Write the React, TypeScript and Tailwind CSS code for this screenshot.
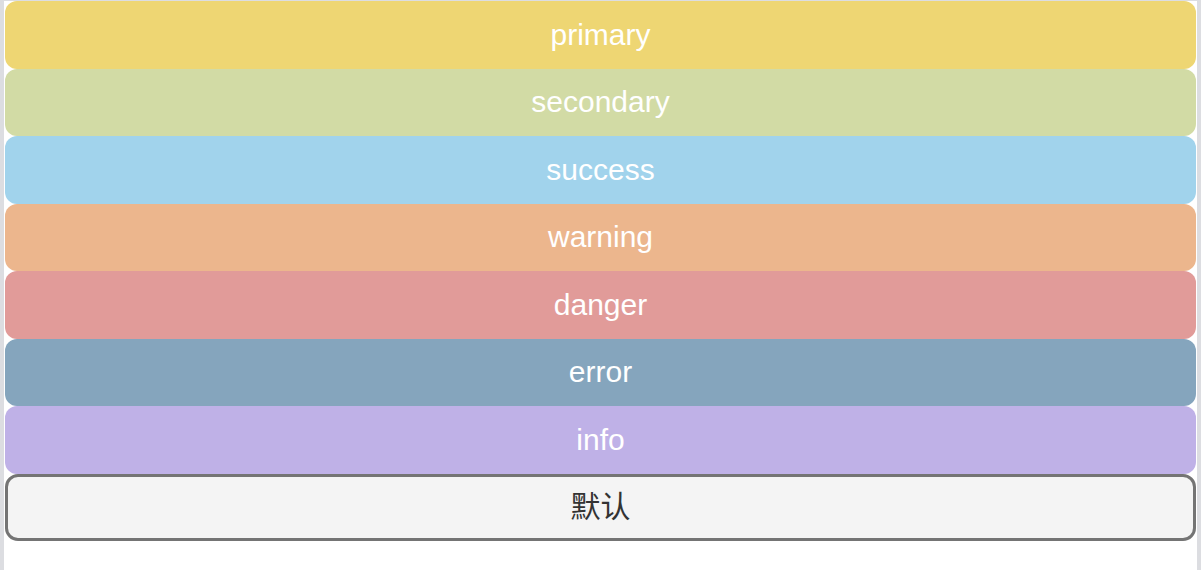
import React from 'react';

const buttons = [
  { label: 'primary', cls: 'bg-[#eed673]' },
  { label: 'secondary', cls: 'bg-[#d2dba5]' },
  { label: 'success', cls: 'bg-[#a1d3ec]' },
  { label: 'warning', cls: 'bg-[#ecb68d]' },
  { label: 'danger', cls: 'bg-[#e19b99]' },
  { label: 'error', cls: 'bg-[#85a5bd]' },
  { label: 'info', cls: 'bg-[#bfb1e7]' },
];

const App: React.FC = () => {
  return (
    <div
      className="flex h-[570px] w-full bg-[#dcdde1] pt-px pl-[4px] pr-[4px]"
      style={{ fontFamily: '"Liberation Sans", "Noto Sans CJK SC", sans-serif' }}
    >
      <div className="flex flex-1 flex-col bg-white px-px">
        {buttons.map(b => (
          <button
            key={b.label}
            className={`flex h-[67.5px] w-full shrink-0 items-center justify-center rounded-[12px] text-[30px] leading-none text-white ${b.cls}`}
          >
            {b.label}
          </button>
        ))}
        <button className="flex h-[67.5px] w-full shrink-0 items-center justify-center rounded-[13px] border-[3px] border-[#747474] bg-[#f4f4f4] text-[30px] leading-none text-[#333333]">
          默认
        </button>
      </div>
    </div>
  );
};

export default App;
